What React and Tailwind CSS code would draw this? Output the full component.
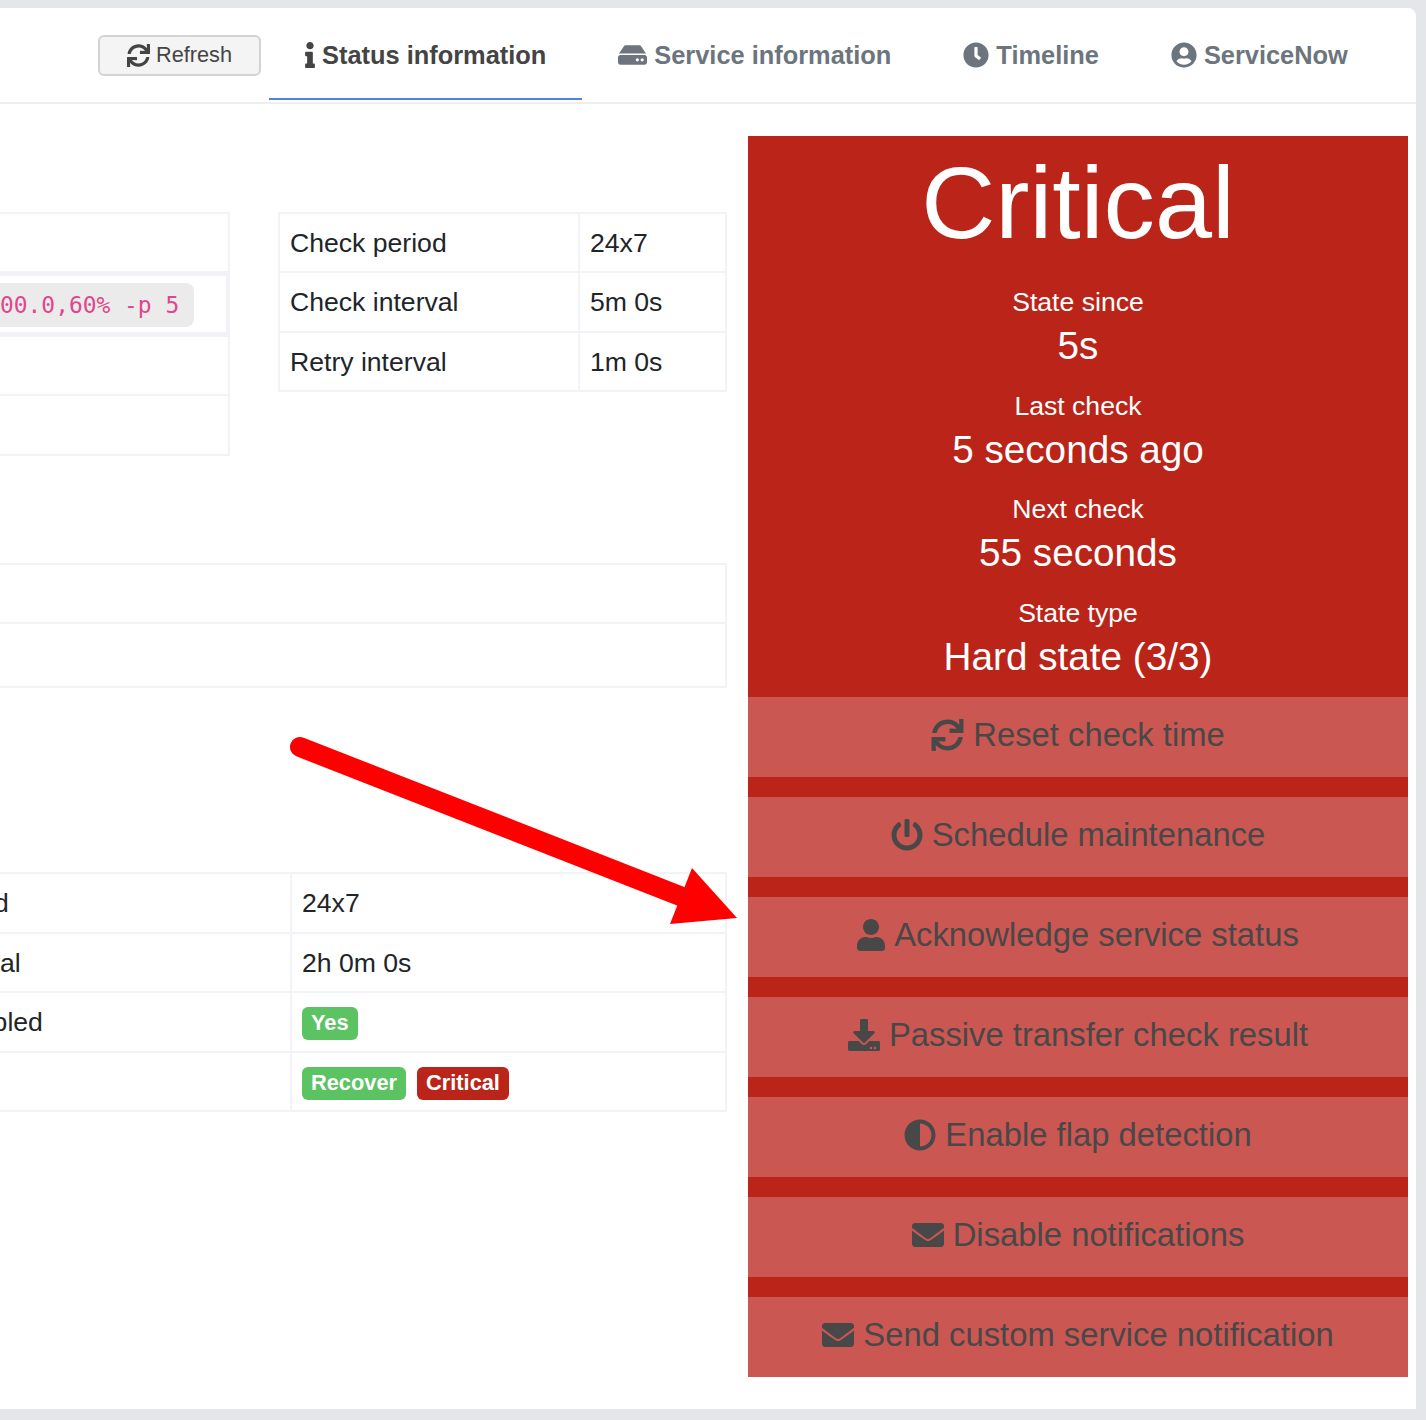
import React from 'react';
import { FaSync, FaInfo, FaHdd, FaClock, FaUserCircle, FaPowerOff, FaUser, FaDownload, FaAdjust, FaEnvelope } from 'react-icons/fa';

const TABS = [
  { label: 'Status information', icon: FaInfo, iconSize: 'h-[26px] w-[10px]', active: true },
  { label: 'Service information', icon: FaHdd, iconSize: 'h-[26px] w-[29px]' },
  { label: 'Timeline', icon: FaClock, iconSize: 'h-[26px] w-[26px]' },
  { label: 'ServiceNow', icon: FaUserCircle, iconSize: 'h-[26px] w-[26px]' },
];

const STATS = [
  { label: 'State since', value: '5s' },
  { label: 'Last check', value: '5 seconds ago' },
  { label: 'Next check', value: '55 seconds' },
  { label: 'State type', value: 'Hard state (3/3)' },
];

const ACTIONS = [
  { label: 'Reset check time', icon: FaSync, iconSize: 'h-[32px] w-[33px]' },
  { label: 'Schedule maintenance', icon: FaPowerOff, iconSize: 'h-[32px] w-[32px]' },
  { label: 'Acknowledge service status', icon: FaUser, iconSize: 'h-[32px] w-[28px]' },
  { label: 'Passive transfer check result', icon: FaDownload, iconSize: 'h-[32px] w-[32px]' },
  { label: 'Enable flap detection', icon: FaAdjust, iconSize: 'h-[32px] w-[32px]' },
  { label: 'Disable notifications', icon: FaEnvelope, iconSize: 'h-[32px] w-[32px]' },
  { label: 'Send custom service notification', icon: FaEnvelope, iconSize: 'h-[32px] w-[32px]' },
];

const CHECKS = [
  ['Check period', '24x7', 'h-[59px]'],
  ['Check interval', '5m 0s', 'h-[60px]'],
  ['Retry interval', '1m 0s', 'h-[59px]'],
];

const td = 'border-2 border-[#f3f3f7] px-[10px] align-middle';

function Badge({ color, children }) {
  return (
    <span className={`inline-flex h-[33px] items-center rounded-[6px] px-[9px] text-[21.8px] font-bold text-white ${color}`}>
      {children}
    </span>
  );
}

function Tab({ label, icon: Icon, iconSize, active }) {
  return (
    <div className={`flex h-[92px] shrink-0 items-center gap-[7px] whitespace-nowrap border-b-2 px-9 pt-1 text-[25.4px] font-bold ${active ? 'border-[#4a86e0] text-[#444444]' : 'border-transparent text-[#6c757d]'}`}>
      <Icon className={iconSize} />
      <span>{label}</span>
    </div>
  );
}

export default function App() {
  return (
    <div className="relative min-h-[1420px] overflow-hidden bg-[#e4e6ea] pb-[11px] pr-[10px] pt-2 text-[#212529]" style={{ fontFamily: '"Liberation Sans", Arial, sans-serif' }}>
      <div className="overflow-hidden rounded-tr-lg bg-white">

        {/* header */}
        <div className="flex h-[96px] items-start border-b-2 border-[#eeeeee] pl-[98px]">
          <button className="mr-2 mt-[27px] flex h-[41px] w-[163px] shrink-0 items-center justify-center gap-[6px] rounded-[6px] border-2 border-[#d3d3d3] bg-[#f4f4f4] text-[21.7px] text-[#444444]">
            <FaSync className="h-[23px] w-[23px]" />
            Refresh
          </button>
          {TABS.map(t => <Tab key={t.label} {...t} />)}
        </div>

        <div className="flex gap-[21px] pb-8 pr-2 pt-8">

          {/* left side, tables */}
          <div className="w-[727px] overflow-hidden pt-[76px] text-[26.6px]">
            <div className="flex items-start gap-[48px]">
              <table className="w-[230px] table-fixed border-collapse">
                <tbody>
                  <tr><td className="h-[59px] border-2 border-l-0 border-[#f3f3f7]"></td></tr>
                  <tr>
                    <td className="h-[64px] border-2 border-l-0 border-[#f3f3f7] p-0">
                      <div className="flex h-[62px] items-center border-y-[3px] border-r-2 border-[#f3f3f7] pt-[2px]">
                        <code className="flex h-[44px] w-[194px] items-center rounded-r-lg bg-[#ebebeb] text-[22.9px] text-[#e0468c]" style={{ fontFamily: '"DejaVu Sans Mono", monospace' }}>00.0,60% -p 5</code>
                      </div>
                    </td>
                  </tr>
                  <tr><td className="h-[59px] border-2 border-l-0 border-[#f3f3f7]"></td></tr>
                  <tr><td className="h-[60px] border-2 border-l-0 border-[#f3f3f7]"></td></tr>
                </tbody>
              </table>
              <table className="w-[449px] table-fixed border-collapse">
                <tbody>
                  {CHECKS.map(([k, v, h]) => (
                    <tr key={k}>
                      <td className={`${td} ${h} w-[300px] pt-[2px]`}>{k}</td>
                      <td className={`${td} pt-[2px]`}>{v}</td>
                    </tr>
                  ))}
                </tbody>
              </table>
            </div>

            <table className="mt-[107px] w-full table-fixed border-collapse">
              <tbody>
                <tr><td className="h-[59px] border-2 border-l-0 border-[#f3f3f7]"></td></tr>
                <tr><td className="h-[64px] border-2 border-l-0 border-[#f3f3f7]"></td></tr>
              </tbody>
            </table>

            {/* labels run off the left edge of the crop */}
            <table className="ml-[-218px] mt-[184px] w-[945px] table-fixed border-collapse">
              <tbody>
                <tr>
                  <td className={`${td} h-[60px] w-[508px] pl-3 pt-[2px]`}>Notification period</td>
                  <td className={`${td} pt-[2px]`}>24x7</td>
                </tr>
                <tr>
                  <td className={`${td} h-[59px] pl-3 pt-[2px]`}>Notification interval</td>
                  <td className={`${td} pt-[2px]`}>2h 0m 0s</td>
                </tr>
                <tr>
                  <td className={`${td} h-[60px] pl-3 pt-[2px]`}>Notifications enabled</td>
                  <td className={td}><Badge color="bg-[#5cc363]">Yes</Badge></td>
                </tr>
                <tr>
                  <td className={`${td} h-[59px] pl-3`}></td>
                  <td className={`${td} pt-[3px]`}>
                    <span className="flex gap-[11px]">
                      <Badge color="bg-[#5cc363]">Recover</Badge>
                      <Badge color="bg-[#ba2419]">Critical</Badge>
                    </span>
                  </td>
                </tr>
              </tbody>
            </table>
          </div>

          {/* right side, status panel */}
          <div className="w-[660px]">
            <div className="h-[561px] bg-[#ba2419] text-center text-white">
              <div className="h-[146px] pt-[7px] text-[102.6px] leading-[120px]">Critical</div>
              {STATS.map(s => (
                <div key={s.label} className="mb-[15.67px]">
                  <div className="h-10 text-[26.6px] leading-10">{s.label}</div>
                  <div className="h-12 text-[38.7px] leading-[48px]">{s.value}</div>
                </div>
              ))}
            </div>
            <div className="flex flex-col gap-5 bg-[#ba2419]">
              {ACTIONS.map(({ label, icon: Icon, iconSize }) => (
                <div key={label} className="flex h-20 items-center justify-center gap-[9px] bg-[#cb5752] pb-1 text-[32.8px] text-[#484848]">
                  <Icon className={iconSize} />
                  <span>{label}</span>
                </div>
              ))}
            </div>
          </div>
        </div>
      </div>

      {/* red annotation arrow */}
      <svg className="absolute left-0 top-0" width="760" height="940" viewBox="0 0 760 940" fill="none">
        <path d="M300 747 L680 896" stroke="#ff0000" strokeWidth="20" strokeLinecap="round" />
        <path d="M692 868 L737 918 L670 924 Z" fill="#ff0000" />
      </svg>
    </div>
  );
}
